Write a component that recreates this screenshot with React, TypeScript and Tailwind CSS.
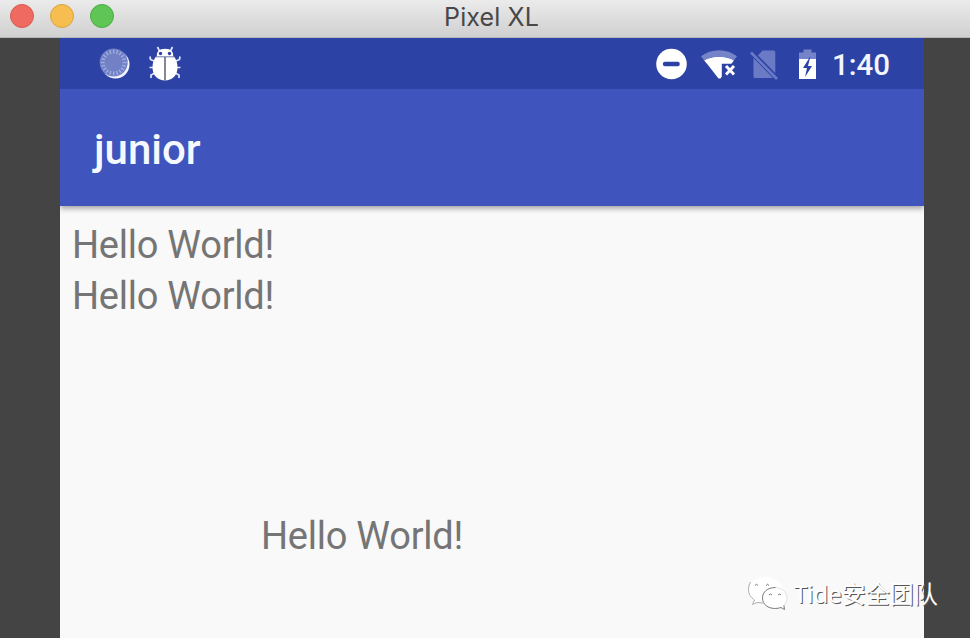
const ticks = Array.from({ length: 20 }, (_, i) => i * 18);

function SyncDisc() {
  return (
    <svg className="h-8 w-8" viewBox="0 0 32 32">
      <circle cx="16.5" cy="16.5" r="14" fill="#f4f6ff" />
      <circle cx="14.7" cy="14.5" r="14" fill="#7280c6" />
      {ticks.map((a) => (
        <path key={a} d="M14.7 1.6V5.5" stroke="#a3aee0" strokeWidth="1.3" transform={`rotate(${a} 14.7 14.5)`} />
      ))}
    </svg>
  );
}

function Bug() {
  return (
    <svg className="h-9 w-8" viewBox="0 0 32 36" fill="none">
      <g stroke="#dfe6ff" strokeWidth="1.7">
        <path d="M11 6 8.5 1M21 6l2.5-5M5 15l-3.500-1.500-.5-3M27 15l3.500-1.500.5-3M5 21.500H.5M27 21.500h4.500M6 27l-4 2v3M26 27l4 2v3" />
      </g>
      <path d="M8 11C7 6 10 2.800 16 2.800S25 6 24 11z" fill="#fff" />
      <path d="M7 10.500h18c2.500 3 3.500 7 3.500 11 0 8-5.500 13-12.500 13S3.500 29.500 3.500 21.500c0-4 1-8 3.500-11z" fill="#fff" />
      <path d="M7 10.800h18" stroke="#7078a5" strokeWidth="1" />
      <path d="M16 11v23.500" stroke="#525365" strokeWidth="1.4" />
      <circle cx="11.500" cy="7.500" r="1.700" fill="#2d42a5" />
      <circle cx="20.500" cy="7.500" r="1.700" fill="#2d42a5" />
    </svg>
  );
}

function StatusIcons() {
  return (
    <svg className="h-[50px] w-[170px]" viewBox="650 38 170 50">
      <circle cx="671.5" cy="63" r="15.3" fill="#fff" />
      <path d="M665 63h12.6" stroke="#2d42a5" strokeWidth="4.4" strokeLinecap="round" />
      <path d="M701 55.3C711 47.2 727 47.2 737 55.3L732 62H706z" fill="#7583c8" />
      <path d="M704.5 59.500C713 54.700 725 54.700 733.500 59.500L720.500 77.500H718.500z" fill="#fff" />
      <path d="M721.800 62.500H738V79H721.800z" fill="#2d42a5" />
      <path d="M704.5 59.500C713 54.700 725 54.700 733.500 59.500L731.500 62.500H707z" fill="#fff" />
      <path d="m726 65 8 8.500m0-8.500-8 8.500" stroke="#fff" strokeWidth="2.9" />
      <path d="M762.500 49.500H773.500c1.200 0 1.800.7 1.800 1.800V73.500L757.500 55zM753.500 57 773 77H755c-1 0-1.500-.6-1.500-1.500z" fill="#6b7ac5" />
      <path d="m754 52 23 23.500" stroke="#2d42a5" strokeWidth="2.200" />
      <path d="m751 51.500 26 26.500" stroke="#6b7ac5" strokeWidth="2.600" />
      <path d="M803.5 48.500h8V51.500h4.500v7h-17v-7h4.500z" fill="#7583c8" />
      <path d="M799 58h17v20h-17z" fill="#fff" />
      <path d="m810.500 55-7.500 12h4l-2 9 7-11h-4z" fill="#2d42a5" />
    </svg>
  );
}

function ChatMark() {
  return (
    <svg className="h-10 w-11" viewBox="746 574 44 40" fill="none">
      <path d="M766 577c-10 0-18 6-18 14 0 4 2 7 5.500 9.500L752 606l6-3.500c2 .6 5 1 8 1 9 0 17-4 17-12s-8-14.500-17-14.500z" fill="#fff" />
      <path d="M750.500 582c-3 5-2.500 12 1 15.500l3 2.500-2 4.500 4.500-2 6 .5" stroke="#999" strokeWidth=".8" />
      <path d="M775 587.500c-7 0-12.500 4.500-12.500 10.500S768 608.500 775 608.500c2 0 4-.4 5.500-1l4 2-1-4c2-1.800 3.500-4 3.500-7.500 0-6-5.500-10.500-12-10.500z" fill="#fff" stroke="#ccc" strokeWidth=".6" />
      <path d="M775.500 587.500c-8 0-13 4.500-13 10.500 0 7 6 10.500 13 10.500 2 0 4-.4 5.500-1l3.500 2-.500-4" stroke="#777" strokeWidth=".9" />
      <path d="M755 585.500q1.500-2.500 3 0M766 585.500q1.500-2.500 3 0M769 595q1.500-2 3 0M778 595q1.500-2 3 0" stroke="#777" />
    </svg>
  );
}

export default function App() {
  return (
    <main className="relative flex h-[638px] w-[970px] flex-col overflow-hidden bg-[#444] font-['Roboto',sans-serif]">
      <header className="relative flex h-[38px] shrink-0 items-center gap-4 border-b border-[#b5b7bd] bg-linear-to-b from-[#ebebeb] to-[#d0d0d0] pb-[5px] pl-[10px]">
        <i className="size-6 rounded-full border border-[#d85b52] bg-[#ef6a60]" />
        <i className="size-6 rounded-full border border-[#d9a53f] bg-[#f6be50]" />
        <i className="size-6 rounded-full border border-[#4aac43] bg-[#5fc655]" />
        <h1 className="absolute inset-x-0 top-0 pl-[13px] text-center font-['Inter',sans-serif] text-[25px] leading-[34px] tracking-[0.1px] text-[#484848]">Pixel XL</h1>
      </header>
      <section className="ml-[60px] flex w-[864px] flex-1 flex-col overflow-hidden bg-[#f9f9f9]">
        <div className="relative z-10 flex h-[51px] shrink-0 items-center bg-[#2d42a5] pl-[39px]">
          <SyncDisc />
          <div className="ml-[18px] flex"><Bug /></div>
          <div className="ml-auto flex items-center">
            <StatusIcons />
            <span className="w-[104px] pt-[3px] pl-[12px] text-[29.5px] leading-[48px] font-medium text-[#f3f6ff]">1:40</span>
          </div>
        </div>
        <div className="flex h-[117px] shrink-0 items-center bg-[#3f55bd] pt-[3px] pl-[34px] text-[42px] font-medium text-[#f5f8ff] shadow-[0_2px_6px_rgba(0,0,0,0.4)]">junior</div>
        <div className="pt-[14px] pl-[12px] text-[38px] leading-[51px] tracking-[-0.25px] text-[#757575]">
          <p>Hello World!</p>
          <p>Hello World!</p>
          <p className="pt-[189px] pl-[189px]">Hello World!</p>
        </div>
      </section>
      <div className="absolute top-[573px] left-[746px] flex items-center">
        <ChatMark />
        <span className="ml-1 pt-[1px] font-['Noto_Sans','Noto_Sans_CJK_SC',sans-serif] text-[24px] leading-[40px] whitespace-nowrap text-white [text-shadow:1px_1px_0.5px_#555]">Tide安全团队</span>
      </div>
    </main>
  );
}
